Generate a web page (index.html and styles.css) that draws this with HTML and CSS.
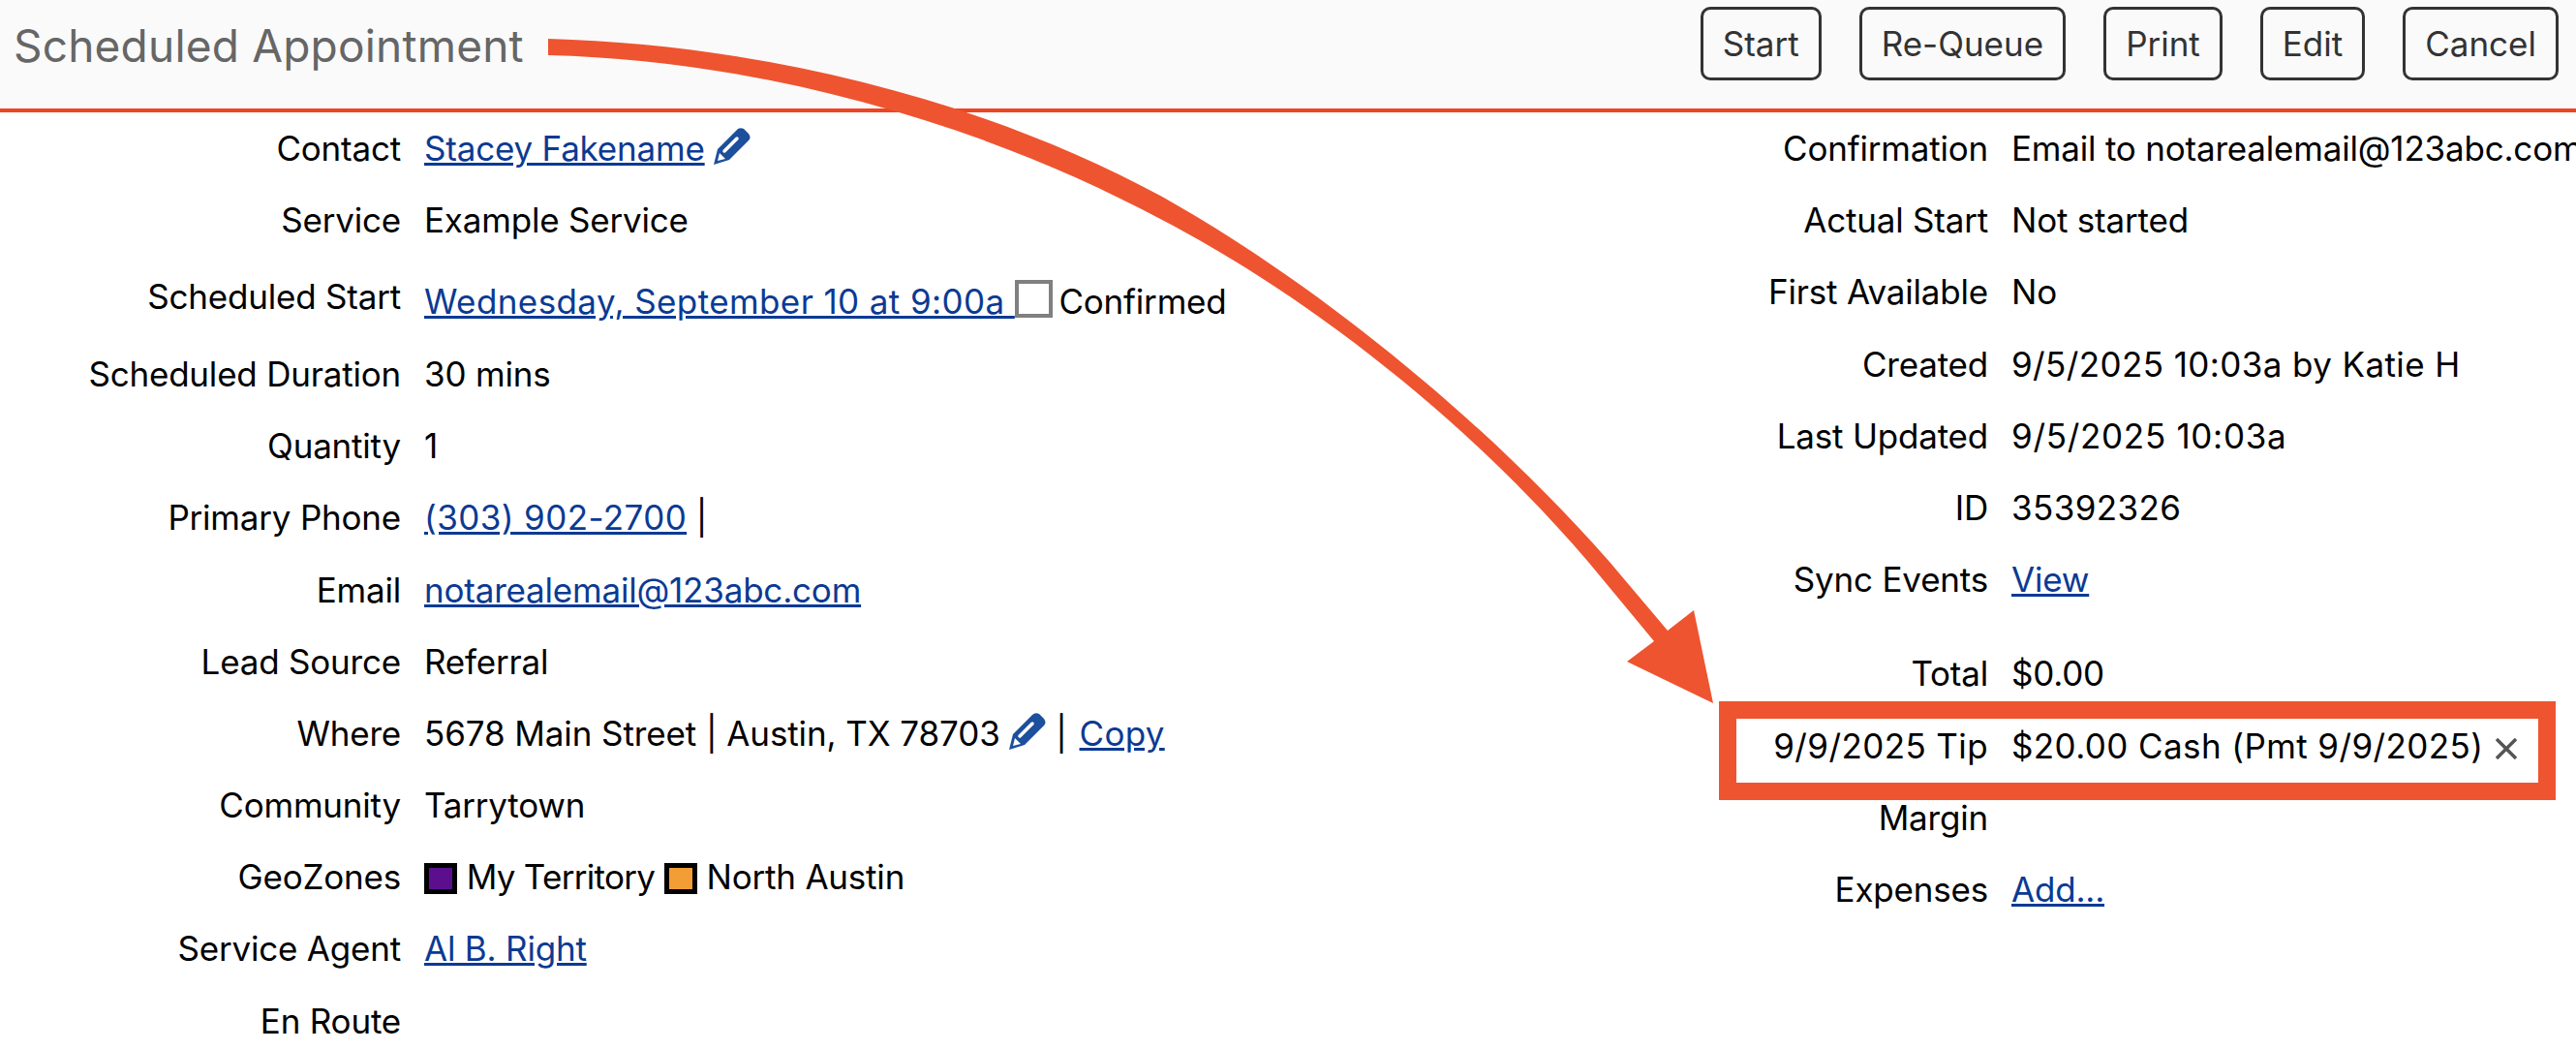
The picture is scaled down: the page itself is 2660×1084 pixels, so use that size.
FILE: index.html
```html
<!DOCTYPE html>
<html lang="en">
<head>
  <meta charset="UTF-8" />
  <title>Scheduled Appointment</title>
  <link rel="stylesheet" href="styles.css">
</head>
<body>
  <header class="topbar">
    <h1 class="title">Scheduled Appointment</h1>
    <div class="actions">
      <button class="btn">Start</button>
      <button class="btn">Re-Queue</button>
      <button class="btn">Print</button>
      <button class="btn">Edit</button>
      <button class="btn">Cancel</button>
    </div>
  </header>

  <main class="details">
    <section class="col col-left">
      <div class="row"><span class="label">Contact</span><span class="value"><a href="#">Stacey Fakename</a> <svg class="pencil" viewBox="0 0 38 38"><path d="M0 38 L4 22 L24 2 Q27 -1 31 1 L36 6 Q39 10 36 13 L16 33 Z" fill="#1c4f9c"/><path d="M11 24 L24 11" stroke="#fff" stroke-width="3.5" stroke-linecap="round"/><path d="M4 34 L6 26 L12 32 Z" fill="#fff"/></svg></span></div>
      <div class="row"><span class="label">Service</span><span class="value">Example Service</span></div>
      <div class="row row-start"><span class="label">Scheduled Start</span><span class="value"><a href="#" class="digits">Wednesday, September 10 at 9:00a </a><span class="checkbox"></span> Confirmed</span></div>
      <div class="row"><span class="label">Scheduled Duration</span><span class="value">30 mins</span></div>
      <div class="row"><span class="label">Quantity</span><span class="value">1</span></div>
      <div class="row"><span class="label">Primary Phone</span><span class="value"><a href="#" class="digits">(303) 902-2700</a> |</span></div>
      <div class="row"><span class="label">Email</span><span class="value"><a href="#">notarealemail@123abc.com</a></span></div>
      <div class="row"><span class="label">Lead Source</span><span class="value">Referral</span></div>
      <div class="row"><span class="label">Where</span><span class="value where">5678 Main Street | Austin, TX 78703 <svg class="pencil" viewBox="0 0 38 38"><path d="M0 38 L4 22 L24 2 Q27 -1 31 1 L36 6 Q39 10 36 13 L16 33 Z" fill="#1c4f9c"/><path d="M11 24 L24 11" stroke="#fff" stroke-width="3.5" stroke-linecap="round"/><path d="M4 34 L6 26 L12 32 Z" fill="#fff"/></svg> | <a href="#">Copy</a></span></div>
      <div class="row"><span class="label">Community</span><span class="value">Tarrytown</span></div>
      <div class="row"><span class="label">GeoZones</span><span class="value"><span class="swatch swatch-purple"></span> <span class="zone-tight">My Territory</span> <span class="swatch swatch-orange"></span> North Austin</span></div>
      <div class="row"><span class="label">Service Agent</span><span class="value"><a href="#">Al B. Right</a></span></div>
      <div class="row"><span class="label">En Route</span><span class="value"></span></div>
    </section>

    <section class="col col-right">
      <div class="row"><span class="label">Confirmation</span><span class="value">Email to notarealemail@123abc.com</span></div>
      <div class="row"><span class="label">Actual Start</span><span class="value">Not started</span></div>
      <div class="row"><span class="label">First Available</span><span class="value">No</span></div>
      <div class="row"><span class="label">Created</span><span class="value digits">9/5/2025 10:03a by Katie H</span></div>
      <div class="row"><span class="label">Last Updated</span><span class="value digits-wide">9/5/2025 10:03a</span></div>
      <div class="row"><span class="label">ID</span><span class="value digits">35392326</span></div>
      <div class="row"><span class="label">Sync Events</span><span class="value"><a href="#">View</a></span></div>
      <div class="row row-total"><span class="label">Total</span><span class="value">$0.00</span></div>
      <div class="row"><span class="label digits">9/9/2025 Tip</span><span class="value"><span class="digits">$20.00 Cash (Pmt 9/9/2025)</span> <svg class="remove" viewBox="0 0 22 22"><path d="M1 1 L21 21 M21 1 L1 21" stroke="#555" stroke-width="3.5"/></svg></span></div>
      <div class="row"><span class="label">Margin</span><span class="value"></span></div>
      <div class="row"><span class="label">Expenses</span><span class="value"><a href="#">Add...</a></span></div>
    </section>
  </main>

  <!-- annotation drawn on top of the screenshot -->
  <svg class="annotation" viewBox="0 0 2660 1084">
    <path d="M566 40 C780 46 1010 100 1200 203 C1355 290 1530 430 1662 580 L1722 651 L1749 630 L1769 726 L1680 683 L1708 662 L1640 580 C1510 428 1345 303 1200 227 C1010 125 780 62 566 57 Z" fill="#ee5430"/>
    <rect x="1784" y="733" width="846" height="84" fill="none" stroke="#ee5430" stroke-width="18"/>
  </svg>
</body>
</html>
```

FILE: styles.css
```css
* {
  box-sizing: border-box;
}

html, body {
  height: 100%;
}

body {
  margin: 0;
  position: relative;
  overflow: hidden;
  background: #fff;
  color: #000;
  font-family: Inter, 'Liberation Sans', sans-serif;
  font-size: 35px;
  letter-spacing: -0.2px;
}

.topbar {
  display: flex;
  justify-content: space-between;
  align-items: center;
  height: 116px;
  padding: 0 18px 22px 14px;
  background: #fafafa;
  border-bottom: 4px solid #ef4423;
}

.title {
  margin: 4px 0 0;
  font-size: 46px;
  font-weight: 400;
  letter-spacing: 0.2px;
  color: #666;
}

.actions {
  display: flex;
  gap: 39px;
}

.btn {
  height: 76px;
  padding: 0 20px;
  font: inherit;
  letter-spacing: 0;
  color: #333;
  background: transparent;
  border: 3px solid #333;
  border-radius: 10px;
}

.details {
  display: flex;
}

.col-left {
  width: 1653px;
  flex: none;
}

.col-left .label {
  width: 414px;
}

.col-right .label {
  width: 400px;
}

.row {
  display: flex;
  gap: 24px;
  height: 74.2px;
  line-height: 74px;
  white-space: nowrap;
}

.label {
  flex: none;
  text-align: right;
}

.digits {
  letter-spacing: 0.4px;
}

.digits-wide {
  letter-spacing: 0.7px;
}

.zone-tight {
  letter-spacing: -0.7px;
}

.where {
  letter-spacing: -0.1px;
}

.where a {
  margin-left: 3px;
  letter-spacing: 0.3px;
}

.row-start {
  height: 84.6px;
}

.row-start .label {
  line-height: 84px;
}

.row-start .value {
  line-height: 94px;
}

.row-total {
  margin-top: 23px;
}

a {
  color: #0b3a93;
}

.pencil {
  width: 38px;
  height: 38px;
  vertical-align: -4px;
}

.checkbox {
  display: inline-block;
  width: 39px;
  height: 39px;
  margin-right: -3px;
  vertical-align: -4px;
  background: #fff;
  border: 4px solid #808080;
}

.swatch {
  display: inline-block;
  width: 34px;
  height: 32px;
  vertical-align: -5px;
  border: 5px solid #000;
}

.swatch-purple {
  background: #5b0f8e;
}

.swatch-orange {
  background: #f39d36;
}

.remove {
  width: 22px;
  height: 22px;
  margin-left: 3px;
  vertical-align: -1px;
}

.annotation {
  position: absolute;
  top: 0;
  left: 0;
  width: 2660px;
  height: 1084px;
  pointer-events: none;
}
```
